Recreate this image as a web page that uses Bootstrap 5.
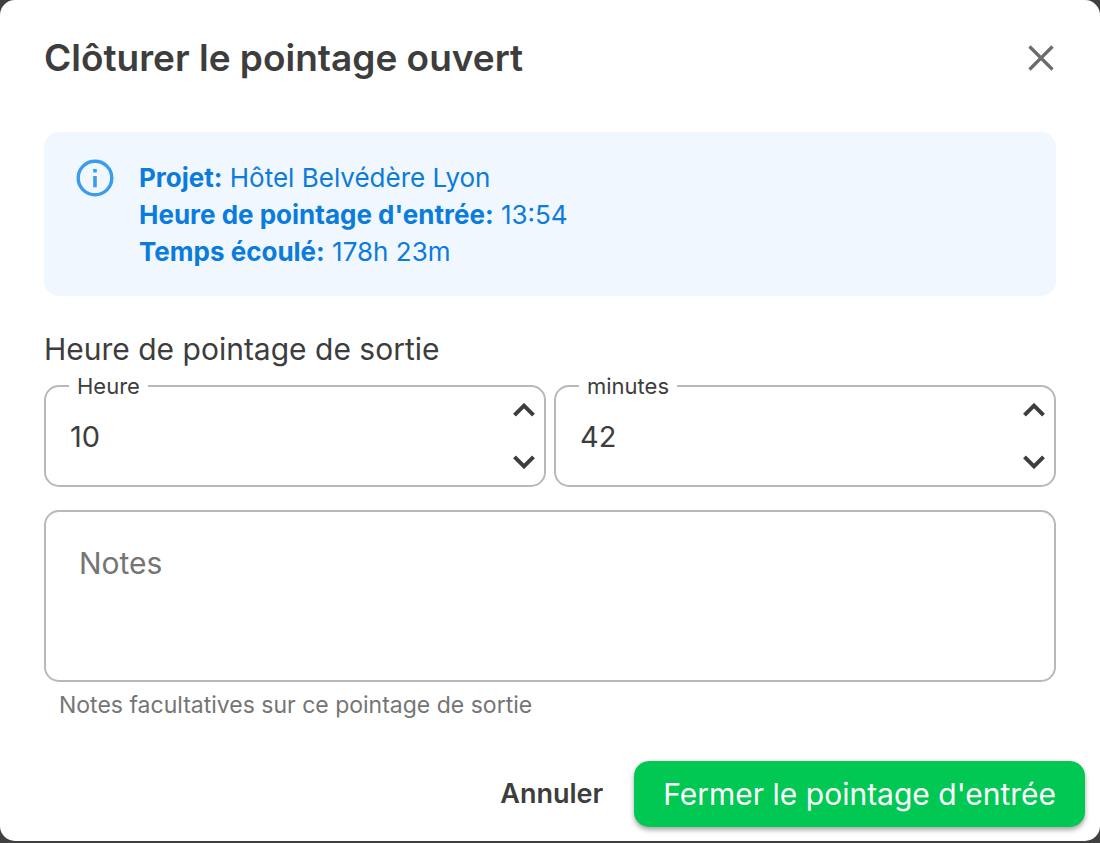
<!DOCTYPE html>
<html lang="fr">
<head>
<meta charset="utf-8">
<meta name="viewport" content="width=device-width, initial-scale=1">
<title>Clôturer le pointage ouvert</title>
<link href="https://cdn.jsdelivr.net/npm/bootstrap@5.3.0/dist/css/bootstrap.min.css" rel="stylesheet">
<style>
  body { background: #404040; color: #3d3d3d; font-family: Inter, "Liberation Sans", sans-serif; font-size: 30px; line-height: 36px; }
  .sheet { background: #fff; border-radius: 15px; padding-bottom: 14px; margin-bottom: 2px; }
  .sheet-head { padding: 36px 44px 0; }
  .sheet-body { padding: 52px 44px 0; }
  .sheet-title { font-size: 37px; line-height: 44px; font-weight: 600; }
  .btn-plain { border: 0; padding: 0; background: none; color: inherit; display: flex; align-items: center; justify-content: center; }
  .btn-dismiss { width: 30px; height: 44px; color: #6b6b6b; }
  .notice { background: #f0f7fe; color: #0b7bdc; border: 0; border-radius: 15px; padding: 27px 32px 26px; gap: 25px; font-size: 26px; line-height: 37px; margin-bottom: 35px; }
  .notice svg { color: #3a9ced; }
  .time-fields { gap: 8px; margin: 6px 0 23px; }
  .outlined { border: 2px solid #b9b9b9; border-radius: 15px; min-width: 0; flex: 1 1 0; }
  .outlined legend { font-size: 22px; line-height: 26px; padding: 0 8px; margin: 0 0 0 23px; }
  .outlined .control { padding: 0 7px 12px 24px; }
  .outlined input { height: 74px; border: 0; padding: 0; font-size: 29px; color: inherit; box-shadow: none; appearance: textfield; -moz-appearance: textfield; }
  .outlined input::-webkit-inner-spin-button { appearance: none; margin: 0; }
  .step { width: 26px; height: 22px; }
  .notes { border: 2px solid #b9b9b9; border-radius: 15px; padding: 33px; height: 172px; font-size: 30px; line-height: 36px; resize: none; color: inherit; }
  .notes::placeholder { color: #757575; }
  .hint { font-size: 23px; line-height: 28px; color: #757575; padding-left: 15px; margin: 9px 0 42px; }
  .sheet-foot { padding: 0 15px; gap: 16px; }
  .btn-cancel { border: 0; padding: 0 15px; font-size: 27px; font-weight: 600; color: #3d3d3d; }
  .btn-confirm { background: #00c853; color: #fff; border: 0; border-radius: 15px; height: 66px; padding: 0 29px; font-size: 30px; font-weight: 400; box-shadow: 0 3px 5px rgba(0,0,0,.35); }
  .btn-confirm:hover { background: #00b54b; color: #fff; }
</style>
</head>
<body>
<main class="sheet" role="dialog" aria-labelledby="sheet-title">
  <header class="sheet-head d-flex justify-content-between align-items-center">
    <h1 class="sheet-title mb-0" id="sheet-title">Clôturer le pointage ouvert</h1>
    <button type="button" class="btn-plain btn-dismiss" aria-label="Fermer">
      <svg width="28" height="28" viewBox="0 0 28 28" fill="none" stroke="currentColor" stroke-width="3.2"><path d="M2.5 2.5l23 23M25.5 2.5l-23 23"/></svg>
    </button>
  </header>
  <form>
    <div class="sheet-body">
      <div class="notice alert d-flex align-items-start">
        <svg class="flex-shrink-0" width="38" height="38" viewBox="0 0 38 38" fill="none" stroke="currentColor"><circle cx="19" cy="19" r="16.8" stroke-width="3.4"/><path d="M19 17v11.2M19 10v3.6" stroke-width="3.6"/></svg>
        <div>
          <div><strong>Projet:</strong> Hôtel Belvédère Lyon</div>
          <div><strong>Heure de pointage d'entrée:</strong> 13:54</div>
          <div><strong>Temps écoulé:</strong> 178h 23m</div>
        </div>
      </div>

      <div>Heure de pointage de sortie</div>
      <div class="time-fields d-flex">
        <fieldset class="outlined">
          <legend class="float-none w-auto"><label class="d-block" for="hour">Heure</label></legend>
          <div class="control d-flex">
            <input class="form-control bg-transparent" type="number" id="hour" min="0" max="23" value="10">
            <div class="d-flex flex-column justify-content-between">
              <button type="button" class="btn-plain step" aria-label="Augmenter l'heure"><svg width="22" height="14" viewBox="0 0 22 14" fill="none" stroke="currentColor" stroke-width="4"><path d="M1.5 12.2L11 2.7l9.500 9.500"/></svg></button>
              <button type="button" class="btn-plain step" aria-label="Diminuer l'heure"><svg width="22" height="14" viewBox="0 0 22 14" fill="none" stroke="currentColor" stroke-width="4"><path d="M1.5 1.800L11 11.300l9.500-9.500"/></svg></button>
            </div>
          </div>
        </fieldset>
        <fieldset class="outlined">
          <legend class="float-none w-auto"><label class="d-block" for="minute">minutes</label></legend>
          <div class="control d-flex">
            <input class="form-control bg-transparent" type="number" id="minute" min="0" max="59" value="42">
            <div class="d-flex flex-column justify-content-between">
              <button type="button" class="btn-plain step" aria-label="Augmenter les minutes"><svg width="22" height="14" viewBox="0 0 22 14" fill="none" stroke="currentColor" stroke-width="4"><path d="M1.5 12.2L11 2.7l9.500 9.500"/></svg></button>
              <button type="button" class="btn-plain step" aria-label="Diminuer les minutes"><svg width="22" height="14" viewBox="0 0 22 14" fill="none" stroke="currentColor" stroke-width="4"><path d="M1.5 1.800L11 11.300l9.500-9.500"/></svg></button>
            </div>
          </div>
        </fieldset>
      </div>

      <textarea class="notes form-control" id="notes" placeholder="Notes" aria-label="Notes" aria-describedby="notes-hint"></textarea>
      <p class="hint" id="notes-hint">Notes facultatives sur ce pointage de sortie</p>
    </div>
    <footer class="sheet-foot d-flex justify-content-end align-items-center">
      <button type="button" class="btn btn-cancel">Annuler</button>
      <button type="submit" class="btn btn-confirm">Fermer le pointage d'entrée</button>
    </footer>
  </form>
</main>
<script src="https://cdn.jsdelivr.net/npm/bootstrap@5.3.0/dist/js/bootstrap.bundle.min.js"></script>
</body>
</html>
